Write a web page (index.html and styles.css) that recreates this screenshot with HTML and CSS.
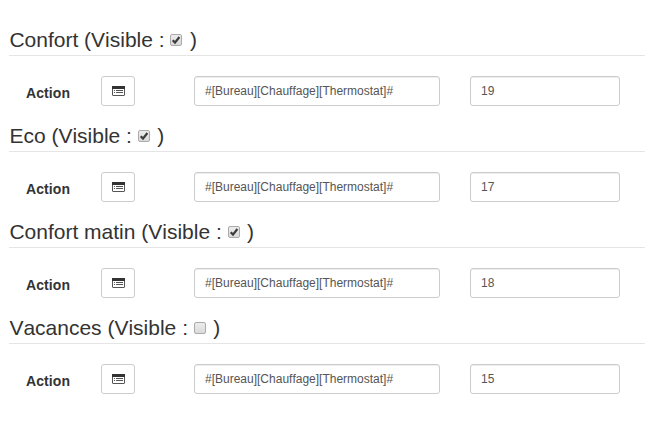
FILE: index.html
```
<!DOCTYPE html>
<html lang="fr">
<head>
<meta charset="utf-8">
<title>Thermostat</title>
<link rel="stylesheet" href="styles.css">
</head>
<body>
<svg class="defs" width="0" height="0" aria-hidden="true">
  <symbol id="list" viewBox="0 0 13 10">
    <rect x=".5" y=".5" width="12" height="9" rx=".5" fill="#fff" stroke="#555"/>
    <path d="M0 0h13v3H0z" fill="#333"/>
    <path d="M2 4.5h1M2 6.5h1M4 4.5h7M4 6.5h7" stroke="#555" fill="none"/>
  </symbol>
  <symbol id="check" viewBox="0 0 12 12">
    <path d="M2.7 6.2L5 8.6L9.4 3" fill="none" stroke="#3c3c3c" stroke-width="2.2"/>
  </symbol>
</svg>
<form class="modes">
  <section class="mode">
    <h2 class="legend">Confort (Visible : <span class="box"><svg><use href="#check"/></svg></span> )</h2>
    <div class="row"><span class="label">Action</span><button type="button" class="pick"><svg><use href="#list"/></svg></button><div class="field command">#[Bureau][Chauffage][Thermostat]#</div><div class="field value">19</div></div>
  </section>
  <section class="mode">
    <h2 class="legend">Eco (Visible : <span class="box"><svg><use href="#check"/></svg></span> )</h2>
    <div class="row"><span class="label">Action</span><button type="button" class="pick"><svg><use href="#list"/></svg></button><div class="field command">#[Bureau][Chauffage][Thermostat]#</div><div class="field value">17</div></div>
  </section>
  <section class="mode">
    <h2 class="legend">Confort matin (Visible : <span class="box"><svg><use href="#check"/></svg></span> )</h2>
    <div class="row"><span class="label">Action</span><button type="button" class="pick"><svg><use href="#list"/></svg></button><div class="field command">#[Bureau][Chauffage][Thermostat]#</div><div class="field value">18</div></div>
  </section>
  <section class="mode">
    <h2 class="legend">Vacances (Visible : <span class="box"></span> )</h2>
    <div class="row"><span class="label">Action</span><button type="button" class="pick"><svg><use href="#list"/></svg></button><div class="field command">#[Bureau][Chauffage][Thermostat]#</div><div class="field value">15</div></div>
  </section>
</form>
</body>
</html>
```
FILE: styles.css
```
* { box-sizing: border-box; }
body {
  margin: 0;
  background: #fff;
  color: #333;
  font-family: "Liberation Sans", Arial, sans-serif;
  font-kerning: none;
  overflow: hidden;
}
.defs { display: block; }
.modes { padding: 25px 0 0 9px; }
.mode { height: 96px; }
.legend {
  height: 31px;
  margin: 0 0 20px;
  border-bottom: 1px solid #e5e5e5;
  font-size: 21px;
  font-weight: 400;
  line-height: 30px;
  text-indent: .4px;
  white-space: nowrap;
}
.box {
  display: inline-block;
  width: 12px;
  height: 12px;
  margin-right: 1.6px;
  border: 1px solid #aaa;
  border-radius: 2px;
  background: linear-gradient(#ececec, #dadada);
  text-indent: 0;
  vertical-align: 1px;
}
.box svg { display: block; width: 12px; height: 12px; margin: -1px; }
.row { display: flex; align-items: flex-start; height: 30px; }
.label {
  width: 92px;
  padding: 9px 0 0 17px;
  font-size: 14px;
  font-weight: 700;
  line-height: 16px;
  letter-spacing: .1px;
}
.pick {
  display: flex;
  align-items: flex-start;
  width: 34px;
  height: 30px;
  margin: 0 59px 0 0;
  padding: 9px 0 0 10px;
  border: 1px solid #ccc;
  border-radius: 3px;
  background: #fff;
}
.pick svg { flex: none; width: 13px; height: 10px; }
.field {
  height: 30px;
  padding: 5px 10px;
  border: 1px solid #ccc;
  border-radius: 3px;
  box-shadow: inset 0 1px 1px rgba(0, 0, 0, .075);
  color: #555;
  font-size: 12px;
  line-height: 18px;
}
.command { width: 246px; margin-right: 30px; }
.value { width: 150px; }
```
